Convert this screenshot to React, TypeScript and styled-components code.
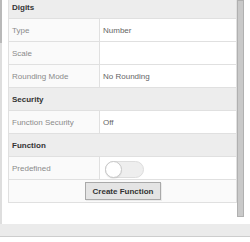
import React from "react";
import styled, { createGlobalStyle } from "styled-components";

const GlobalStyle = createGlobalStyle`
  html, body { margin: 0; padding: 0; background: #ffffff; }
  body { font-family: "Liberation Sans", Arial, sans-serif; }
  * { box-sizing: border-box; }
`;

const Frame = styled.div`
  width: 250px;
  height: 242px;
  display: flex;
  flex-direction: column;
  overflow: hidden;
  background: #ffffff;
`;

const Main = styled.div`
  display: flex;
  height: 224px;
  flex: 0 0 224px;
  overflow: hidden;
`;

const LeftRail = styled.div`
  width: 2px;
  flex: 0 0 2px;
  background: #dedede;
  display: flex;
  flex-direction: column;
`;

const RailThumb = styled.div`
  height: 43px;
  background: #b9b9b9;
`;

const Content = styled.div`
  flex: 0 0 229px;
  margin-left: 6px;
  overflow: hidden;
`;

const ScrollTrack = styled.div`
  flex: 0 0 7px;
  display: flex;
  flex-direction: column;
`;

const ScrollThumb = styled.div`
  height: 217px;
  background: #c9c9c9;
  border: 1px solid #b0b0b0;
`;

const Footer = styled.div`
  height: 13px;
  flex: 0 0 13px;
  background: #ebebeb;
  border-bottom: 1px solid #cdcdcd;
`;

const Table = styled.div`
  margin-top: -5px;
  border: 1px solid #e0e0e0;
  font-size: 8px;
`;

const Row = styled.div`
  display: grid;
  grid-template-columns: 91px 1fr;
  height: 23px;
  border-bottom: 1px solid #e0e0e0;
  &:last-child {
    border-bottom: none;
    height: 22px;
  }
`;

const HeaderCell = styled.div`
  grid-column: 1 / -1;
  background: #ededed;
  color: #333333;
  font-weight: bold;
  display: flex;
  align-items: center;
  padding-left: 3px;
`;

const LabelCell = styled.div`
  background: #fafafa;
  border-right: 1px solid #e0e0e0;
  color: #8a8a8a;
  display: flex;
  align-items: center;
  padding-left: 3px;
`;

const ValueCell = styled.div`
  background: #ffffff;
  color: #666666;
  display: flex;
  align-items: center;
  padding-left: 3px;
`;

const ActionCell = styled.div`
  grid-column: 1 / -1;
  background: #fafafa;
  display: flex;
  align-items: center;
  justify-content: center;
  padding-left: 1px;
`;

const Button = styled.button`
  width: 76px;
  height: 18px;
  padding: 0;
  margin: 0;
  border: 1px solid #a9a9a9;
  background: #e4e4e4;
  color: #333333;
  font-family: "Liberation Sans", Arial, sans-serif;
  font-size: 8px;
  font-weight: bold;
  box-shadow: 1px 1px 0 rgba(0, 0, 0, 0.06);
`;

const Toggle = styled.div<{ $on?: boolean }>`
  position: relative;
  width: 39px;
  height: 17px;
  border-radius: 9px;
  background: ${(p) => (p.$on ? "#7fb0e0" : "#eeeeee")};
  border: 1px solid #dddddd;
  margin-top: 2px;
  margin-left: 2px;
`;

const Knob = styled.div`
  position: absolute;
  left: -1px;
  top: -1px;
  width: 17px;
  height: 17px;
  border-radius: 50%;
  background: #ffffff;
  border: 1px solid #c8c8c8;
  box-shadow: 0 1px 1px rgba(0, 0, 0, 0.08);
`;

type Item =
  | { kind: "header"; text: string }
  | { kind: "field"; label: string; value?: string; toggle?: boolean }
  | { kind: "action"; text: string };

const items: Item[] = [
  { kind: "header", text: "Digits" },
  { kind: "field", label: "Type", value: "Number" },
  { kind: "field", label: "Scale", value: "" },
  { kind: "field", label: "Rounding Mode", value: "No Rounding" },
  { kind: "header", text: "Security" },
  { kind: "field", label: "Function Security", value: "Off" },
  { kind: "header", text: "Function" },
  { kind: "field", label: "Predefined", toggle: true },
  { kind: "action", text: "Create Function" },
];

export default function App() {
  return (
    <>
      <GlobalStyle />
      <Frame>
        <Main>
          <LeftRail>
            <RailThumb />
          </LeftRail>
          <Content>
            <Table>
              {items.map((it, i) => (
                <Row key={i}>
                  {it.kind === "header" && <HeaderCell>{it.text}</HeaderCell>}
                  {it.kind === "field" && (
                    <>
                      <LabelCell>{it.label}</LabelCell>
                      <ValueCell>
                        {it.toggle ? (
                          <Toggle>
                            <Knob />
                          </Toggle>
                        ) : (
                          it.value
                        )}
                      </ValueCell>
                    </>
                  )}
                  {it.kind === "action" && (
                    <ActionCell>
                      <Button type="button">{it.text}</Button>
                    </ActionCell>
                  )}
                </Row>
              ))}
            </Table>
          </Content>
          <ScrollTrack>
            <ScrollThumb />
          </ScrollTrack>
        </Main>
        <Footer />
      </Frame>
    </>
  );
}
